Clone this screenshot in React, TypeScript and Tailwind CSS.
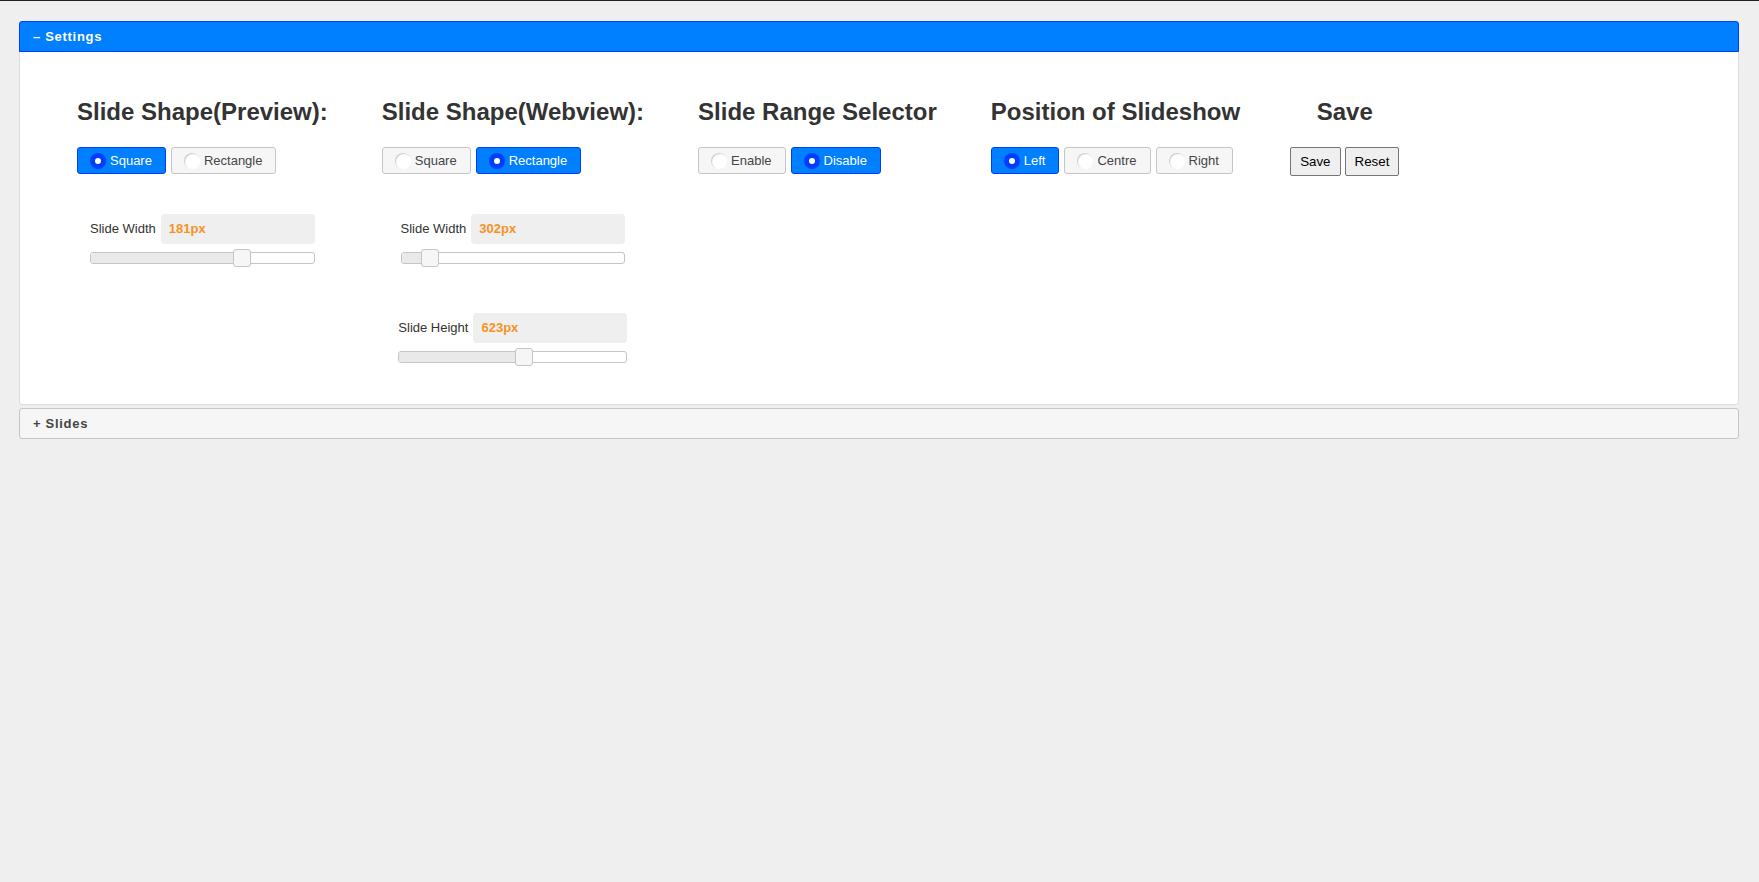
import React from "react";

type Option = { label: string; checked?: boolean };

type SliderRow = { label: string; value: string; percent: number };

type Column = {
  title: string;
  options: Option[];
  sliders?: SliderRow[];
};

const columns: Column[] = [
  {
    title: "Slide Shape(Preview):",
    options: [{ label: "Square", checked: true }, { label: "Rectangle" }],
    sliders: [{ label: "Slide Width", value: "181px", percent: 68 }],
  },
  {
    title: "Slide Shape(Webview):",
    options: [{ label: "Square" }, { label: "Rectangle", checked: true }],
    sliders: [
      { label: "Slide Width", value: "302px", percent: 12.8 },
      { label: "Slide Height", value: "623px", percent: 54.7 },
    ],
  },
  {
    title: "Slide Range Selector",
    options: [{ label: "Enable" }, { label: "Disable", checked: true }],
  },
  {
    title: "Position of Slideshow",
    options: [{ label: "Left", checked: true }, { label: "Centre" }, { label: "Right" }],
  },
];

function RadioButton({ label, checked }: Option) {
  return (
    <button
      type="button"
      className={
        checked
          ? "flex h-[27px] items-center rounded-[3px] border border-[#003eff] bg-[#007fff] pl-[12px] pr-[13px] text-[13px] text-white"
          : "flex h-[27px] items-center rounded-[3px] border border-[#c5c5c5] bg-[#f6f6f6] pl-[12px] pr-[13px] text-[13px] text-[#454545]"
      }
    >
      {checked ? (
        <span className="mr-[4px] h-4 w-4 rounded-full border-[5px] border-[#003eff] bg-white" />
      ) : (
        <span className="mr-[4px] h-4 w-4 rounded-full bg-white shadow-[inset_1px_1px_1px_#cccccc]" />
      )}
      {label}
    </button>
  );
}

function Slider({ label, value, percent }: SliderRow) {
  return (
    <div className="inline-flex flex-col">
      <div className="flex items-center">
        <span className="text-[13px] text-[#333]">{label}</span>
        <div className="ml-[5px] flex h-[30px] w-[154px] items-center rounded-[4px] bg-[#efefef] pl-[8px] text-[13px] font-bold text-[#f6931f]">
          {value}
        </div>
      </div>
      <div className="relative mt-[8px] h-[12px] w-full rounded-[3px] border border-[#c5c5c5] bg-white">
        <div
          className="absolute top-0 bottom-0 left-0 rounded-l-[3px] bg-[#e9e9e9]"
          style={{ width: `${percent}%` }}
        />
        <div
          className="absolute top-[-4px] -ml-[9px] h-[18px] w-[18px] rounded-[3px] border border-[#c5c5c5] bg-[#f6f6f6]"
          style={{ left: `${percent}%` }}
        />
      </div>
    </div>
  );
}

export default function App() {
  return (
    <div className="min-h-screen border-t border-[#1f2223] bg-[#efefef] pt-[20px] pl-[19px] pr-[20px] font-['Liberation_Sans',Arial,sans-serif]">
      {/* Settings panel */}
      <div className="flex h-[31px] items-center rounded-t-[3px] border border-[#003eff] bg-[#007fff] pl-[13px] text-[13px] font-bold tracking-[0.7px] text-white">
        – Settings
      </div>
      <div className="rounded-b-[3px] border border-t-0 border-[#dddddd] bg-white pt-[46px] pb-[41px] pl-[57px]">
        <div className="flex items-start gap-[54px]">
          {columns.map((col) => (
            <div key={col.title} className="flex flex-col">
              <h2 className="text-[24px] leading-[27px] font-bold text-[#333]">{col.title}</h2>
              <div className="mt-[22px] flex gap-[5px]">
                {col.options.map((opt) => (
                  <RadioButton key={opt.label} label={opt.label} checked={opt.checked} />
                ))}
              </div>
              {col.sliders && (
                <div className="mt-[40px] flex flex-col items-center gap-[49px]">
                  {col.sliders.map((s) => (
                    <Slider key={s.label} label={s.label} value={s.value} percent={s.percent} />
                  ))}
                </div>
              )}
            </div>
          ))}

          <div className="-ml-[4px] flex flex-col items-center">
            <h2 className="text-[24px] leading-[27px] font-bold text-[#333]">Save</h2>
            <div className="mt-[22px] flex gap-[4px]">
              <button
                type="button"
                className="h-[29px] rounded-[2px] border border-[#767676] bg-[#efefef] px-[9px] text-[13.33px] text-black"
              >
                Save
              </button>
              <button
                type="button"
                className="h-[29px] rounded-[2px] border border-[#767676] bg-[#efefef] px-[9px] text-[13.33px] text-black"
              >
                Reset
              </button>
            </div>
          </div>
        </div>
      </div>

      {/* Slides panel */}
      <div className="mt-[3px] flex h-[31px] items-center rounded-[3px] border border-[#c5c5c5] bg-[#f6f6f6] pl-[13px] text-[13px] font-bold tracking-[0.7px] text-[#454545]">
        + Slides
      </div>
    </div>
  );
}
